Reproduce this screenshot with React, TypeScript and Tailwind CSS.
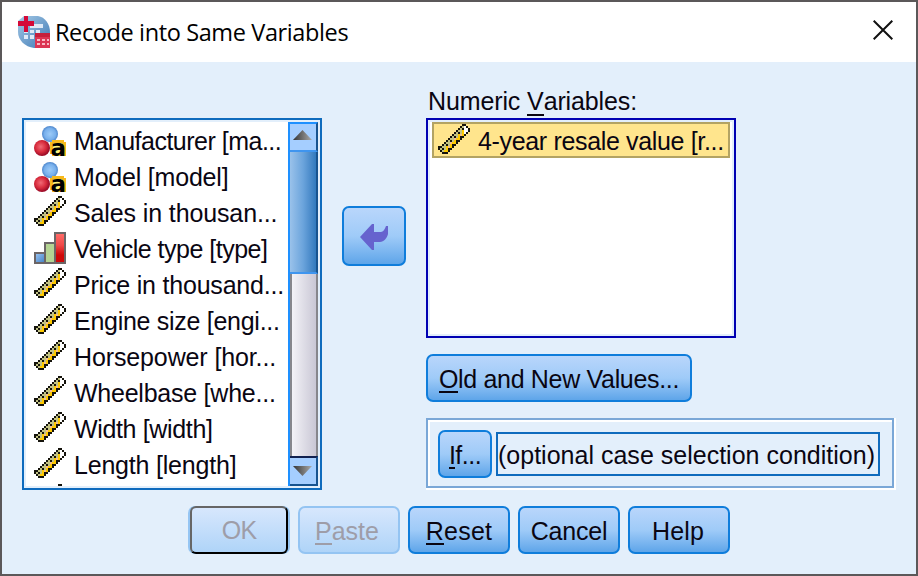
import type { ReactNode } from "react";

const RULER = [
  "............KK..",
  "...........KOWK.",
  "..........KOKWWK",
  ".........KOOYWWK",
  "........KOKOYWK.",
  ".......KOOYPYK..",
  "......KOKOYKK...",
  ".....KOOPYYK....",
  "....KOKOYKK.....",
  "...KOOPYYK......",
  "..KOKOYKK.......",
  "KKOOYPYK........",
  "KOKOYKK.........",
  ".KOYYK..........",
  "..KKK...........",
];

const PIXELS: Record<string, string> = {
  K: "#15130c",
  O: "#c2c283",
  W: "#ffffff",
  Y: "#ffca00",
  P: "#f6bd8e",
};

function RulerIcon() {
  return (
    <svg className="block h-[30px] w-8 shrink-0" viewBox="0 0 16 15" shapeRendering="crispEdges">
      {RULER.flatMap((row, y) =>
        row.split("").map((c, x) =>
          c === "." ? null : <rect key={`${x}-${y}`} x={x} y={y} width="1" height="1" fill={PIXELS[c]} />
        )
      )}
    </svg>
  );
}

function NominalIcon() {
  return (
    <svg className="mt-0.5 block h-8 w-8 shrink-0 overflow-visible" viewBox="0 0 32 32">
      <defs>
        <radialGradient id="blueBall" cx="50%" cy="50%" r="50%">
          <stop offset="0" stopColor="#9ccbf8" />
          <stop offset=".7" stopColor="#78b0ec" />
          <stop offset="1" stopColor="#4d86cc" />
        </radialGradient>
        <radialGradient id="redBall" cx="42%" cy="42%" r="56%">
          <stop offset="0" stopColor="#f06a76" />
          <stop offset=".6" stopColor="#d82b3c" />
          <stop offset="1" stopColor="#9c0c28" />
        </radialGradient>
      </defs>
      <circle cx="16" cy="8" r="8" fill="url(#blueBall)" />
      <circle cx="8" cy="22" r="8" fill="url(#redBall)" />
      <path d="M18 14h12v2h2v14H18v-2h-2V16h2z" fill="#f7b91c" />
      <path d="M19 17h9v11h-9z" fill="#fff27a" />
      <text x="16.500" y="29.500" fontFamily="DejaVu Sans" fontWeight="bold" fontSize="23" fill="#000">a</text>
    </svg>
  );
}

function BarsIcon() {
  return (
    <svg className="block h-8 w-8 shrink-0" viewBox="0 0 32 32" shapeRendering="crispEdges">
      <defs>
        <linearGradient id="redBar" x1="0" y1="0" x2="0" y2="1">
          <stop offset="0" stopColor="#ff6a66" />
          <stop offset=".4" stopColor="#f04848" />
          <stop offset=".75" stopColor="#d00808" />
        </linearGradient>
        <linearGradient id="blueBar" x1="0" y1="0" x2="1" y2="1">
          <stop offset="0" stopColor="#94c0ef" />
          <stop offset="1" stopColor="#4a86c8" />
        </linearGradient>
      </defs>
      <path d="M0 20h10V10h10V0h12v32H0z" fill="#6b6566" />
      <path d="M2 22h8v8H2z" fill="url(#blueBar)" />
      <path d="M12 12h8v18h-8z" fill="#b4d493" />
      <path d="M22 2h8v28h-8z" fill="url(#redBar)" />
    </svg>
  );
}

function AppLogo() {
  return (
    <svg className="block h-8 w-8 shrink-0" viewBox="0 0 32 32">
      <defs>
        <linearGradient id="globe" x1="0" y1="0" x2="1" y2="1">
          <stop offset="0" stopColor="#a5c9e6" />
          <stop offset="1" stopColor="#3c78b4" />
        </linearGradient>
      </defs>
      <path d="M6 0h14c7 1 12 8 12 16v8l-8 8h-8C7 31 0 24 0 16V5z" fill="url(#globe)" />
      <path d="M12 8h13v4H12zM6 14h4v3H6zM12 14h4v3h-4zM18 14h4v3h-4zM6 19h4v4H6zM12 19h4v4h-4z" fill="#dfeaf7" />
      <path d="M6 0h4v5h6v5h-6v6H6v-6H0V5h6z" fill="#d40a38" />
      <path d="M17 17h15v15H17z" fill="#db3553" />
      <path d="M17 17h15v4H17z" fill="#c51f3c" />
      <path d="M19 23h3v2h-3zM24 23h3v2h-3zM29 23h2v2h-2zM19 27h3v2h-3zM24 27h3v2h-3zM29 27h2v2h-2z" fill="#f6b8c4" />
    </svg>
  );
}

const VARIABLES: { icon: "nominal" | "scale" | "ordinal"; label: string; tracking: string }[] = [
  { icon: "nominal", label: "Manufacturer [ma...", tracking: "tracking-[-0.500px]" },
  { icon: "nominal", label: "Model [model]", tracking: "tracking-[-0.200px]" },
  { icon: "scale", label: "Sales in thousan...", tracking: "tracking-[-0.120px]" },
  { icon: "ordinal", label: "Vehicle type [type]", tracking: "tracking-[-0.500px]" },
  { icon: "scale", label: "Price in thousand...", tracking: "tracking-[-0.200px]" },
  { icon: "scale", label: "Engine size [engi...", tracking: "tracking-[-0.280px]" },
  { icon: "scale", label: "Horsepower [hor...", tracking: "tracking-[-0.120px]" },
  { icon: "scale", label: "Wheelbase [whe...", tracking: "tracking-[-0.240px]" },
  { icon: "scale", label: "Width [width]", tracking: "tracking-[-0.350px]" },
  { icon: "scale", label: "Length [length]", tracking: "tracking-[-0.200px]" },
  { icon: "scale", label: "", tracking: "" },
];

function Mnemonic({ children, className = "" }: { children: ReactNode; className?: string }) {
  return <span className={`inline-block border-b-2 border-current ${className}`}>{children}</span>;
}

function Button({ className, children }: { className: string; children: ReactNode }) {
  return (
    <button
      className={`flex h-12 shrink-0 items-center justify-center whitespace-nowrap rounded-[7px] border-2 border-[#0f7ddb] bg-linear-to-b from-[#b9d6fb] via-[#9fcbf8] to-[#5ea5e9] leading-6 ${className}`}
    >
      {children}
    </button>
  );
}

function ScrollBar() {
  return (
    <div className="flex h-[364px] w-[30px] shrink-0 flex-col border-l-2 border-[#1e90ff] bg-[#a5ceff]">
      <div className="flex h-[30px] justify-center border-y-2 border-r-2 border-t-[#1e90ff] border-r-[#17538f] border-b-[#3f95ef] pt-1.5">
        <svg className="h-2.5 w-5" viewBox="0 0 20 10">
          <defs>
            <linearGradient id="arrow">
              <stop offset="0" stopColor="#353535" />
              <stop offset="1" stopColor="#aaa" />
            </linearGradient>
          </defs>
          <path d="M0 10L9.500 0L19 10z" fill="url(#arrow)" />
        </svg>
      </div>
      <div className="h-[122px] border-r-2 border-b-2 border-r-[#17538f] border-b-[#3f95ef] bg-linear-to-r from-[#9ac2ea] via-[#6ba4dc] to-[#3179bd]" />
      <div className="h-[182px] border-x-2 border-x-[#86868c] bg-linear-to-r from-[#f3f2f7] to-[#c9c7d5]" />
      <div className="flex h-[30px] items-center justify-center border-y-2 border-r-2 border-t-[#10204f] border-r-[#17538f] border-b-[#17538f]">
        <svg className="h-2.5 w-5" viewBox="0 0 20 10">
          <path d="M0 0h19L9.500 10z" fill="url(#arrow)" />
        </svg>
      </div>
    </div>
  );
}

export default function App() {
  return (
    <div className="flex h-[576px] w-[918px] flex-col overflow-hidden border-2 border-[#5b5859] bg-[#e3effb] font-['Liberation_Sans',Arial,sans-serif] text-[25px] text-[#0a0612]">
      <header className="flex h-[60px] shrink-0 items-center bg-white pr-[23px] pl-4">
        <AppLogo />
        <h1 className="ml-[5px] flex-1 whitespace-nowrap font-['Open_Sans','Noto_Sans',sans-serif] text-[23.500px] leading-[60px] tracking-[-0.380px] text-black">
          Recode into Same Variables
        </h1>
        <svg className="-mt-1 h-5 w-5" viewBox="0 0 20 20" stroke="#111" strokeWidth="2">
          <path d="M.7.7l18.600 18.600M19.300.7L.7 19.300" />
        </svg>
      </header>

      <main className="flex h-[444px] shrink-0 pl-5">
        <div className="mt-14 flex h-[372px] w-[300px] shrink-0 border-2 border-[#0f6bbd]">
          <div className="flex h-[368px] w-[296px] border-2 border-[#e3effb] bg-white">
            <ul className="h-[364px] w-[264px] overflow-hidden pt-0.5 pl-2">
              {VARIABLES.map((v, i) => (
                <li key={i} className="flex h-9 items-start">
                  {v.icon === "nominal" ? <NominalIcon /> : v.icon === "ordinal" ? <BarsIcon /> : <RulerIcon />}
                  <span className={`ml-2 whitespace-nowrap leading-[35px] ${v.tracking}`}>{v.label}</span>
                </li>
              ))}
            </ul>
            <ScrollBar />
          </div>
        </div>

        <button className="mt-36 ml-5 flex h-[60px] w-16 shrink-0 items-center justify-center rounded-[7px] border-2 border-[#0f7ddb] bg-linear-to-b from-[#b9d6fb] via-[#9fcbf8] to-[#5ea5e9]">
          <svg className="mt-0.5 h-[26px] w-7" viewBox="0 0 28 26" fill="#6663ce">
            <path d="M0 13L12 0h2v8h7c2 0 4-3 5-6h2v8c-1 4-4 8-8 8h-6v8h-2z" />
          </svg>
        </button>

        <section className="ml-5 flex w-[470px] flex-col">
          <div className="mt-6 h-8 pl-[2px] leading-[30px] tracking-[-0.120px]">
            Numeric <Mnemonic className="h-[30px]">V</Mnemonic>ariables:
          </div>
          <div className="h-[220px] w-[310px] border-2 border-[#0000b2]">
            <div className="h-[216px] border-2 border-[#e3effb] bg-white px-0.5">
              <div className="flex h-9 items-start border-2 border-[#b3a363] bg-[#ffe58d] pl-1">
                <RulerIcon />
                <span className="ml-2 whitespace-nowrap leading-[35px] tracking-[-0.340px]">4-year resale value [r...</span>
              </div>
            </div>
          </div>
          <Button className="mt-4 w-[266px] pt-1 tracking-[-0.320px]">
            <span>
              <Mnemonic>O</Mnemonic>ld and New Values...
            </span>
          </Button>
          <div className="mt-4 h-[72px] border-r-2 border-b-2 border-white">
            <div className="h-[70px] border-2 border-[#7aa7d7]">
              <div className="flex h-[66px] border-t-2 border-l-2 border-white pt-2 pl-2">
                <Button className="w-[54px] pt-1 tracking-[-0.500px]">
                  <span>
                    <Mnemonic>I</Mnemonic>f...
                  </span>
                </Button>
                <div className="mt-0.5 ml-1 h-11 w-[384px] shrink-0 whitespace-nowrap border-2 border-[#0f6bbd] leading-[42px] tracking-[0.010px]">
                  (optional case selection condition)
                </div>
              </div>
            </div>
          </div>
        </section>
      </main>

      <footer className="flex gap-2 pl-[186px]">
        <div className="h-12 w-[102px] rounded-[7px] bg-[#95c5f3] px-0.5">
          <div className="flex h-12 items-center justify-center rounded-[6px] border-2 border-t-[#666] border-r-black border-b-black border-l-[#666] bg-linear-to-b from-[#d7e7fd] to-[#afd4f8] pt-0.5 tracking-[-0.800px] text-[#9e9da8]">
            OK
          </div>
        </div>
        <button className="flex h-12 w-[102px] items-center justify-center rounded-[7px] border-2 border-[#94c4f2] bg-linear-to-b from-[#d7e7fd] to-[#afd4f8] pt-1 pr-1 leading-6 text-[#9e9da8]">
          <span>
            <Mnemonic>P</Mnemonic>aste
          </span>
        </button>
        <Button className="w-[102px] pt-1 tracking-[0.200px]">
          <span>
            <Mnemonic>R</Mnemonic>eset
          </span>
        </Button>
        <Button className="w-[102px] pt-0.5 tracking-[-0.200px]">Cancel</Button>
        <Button className="w-[102px] pt-0.5 pr-0.5 tracking-[0.100px]">Help</Button>
      </footer>
    </div>
  );
}
